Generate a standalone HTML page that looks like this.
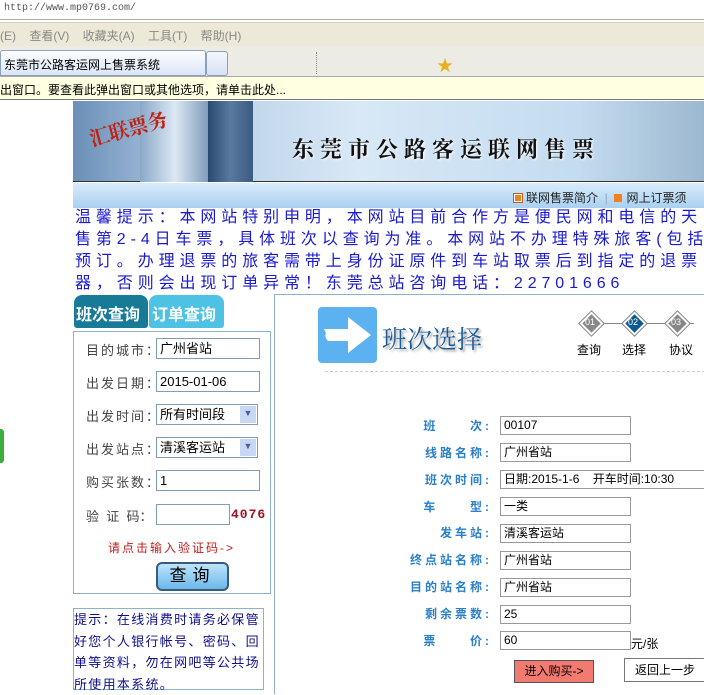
<!DOCTYPE html>
<html><head><meta charset="utf-8"><style>
*{margin:0;padding:0;box-sizing:border-box}
body{width:704px;height:688px;overflow:hidden;position:relative;background:#fff;font-family:"Liberation Sans","Noto Sans CJK SC",sans-serif;font-size:12px;color:#000}
.a{position:absolute;white-space:nowrap}
.inp{position:absolute;border:1px solid #7f9db9;background:#fff;height:21px;font-size:13px;padding:2px 3px;line-height:15px}
.lbl{position:absolute;color:#444;font-size:13px;letter-spacing:2px}
.rl{position:absolute;right:212px;color:#2a7fc9;font-weight:bold;font-size:12px;letter-spacing:3px;text-align:right}
.ri{position:absolute;left:500px;width:131px;height:19px;border:1px solid #999;background:#fff;font-size:12px;padding:1px 3px;line-height:15px}
.dia{position:absolute;width:17px;height:17px;transform:rotate(45deg);border:2px solid #fff;outline:1px solid #888}
</style></head><body>
<div class="a" style="left:0;top:0;width:704px;height:20px;background:#fff;border-bottom:1px solid #aaa;font-family:'Liberation Mono',monospace;font-size:10px;color:#555;padding:3px 4px">http://www.mp0769.com/</div>
<div class="a" style="left:0;top:22px;width:704px;height:24px;background:#ece9d8;border-top:1px solid #d8d4c4;color:#888;font-size:12px;padding:4px 0">(E)&nbsp;&nbsp;&nbsp;&nbsp;查看(V)&nbsp;&nbsp;&nbsp;&nbsp;收藏夹(A)&nbsp;&nbsp;&nbsp;&nbsp;工具(T)&nbsp;&nbsp;&nbsp;&nbsp;帮助(H)</div>
<div class="a" style="left:0;top:46px;width:704px;height:31px;background:#ecebe4;border-bottom:1px solid #aaa"></div>
<div class="a" style="left:0;top:50px;width:206px;height:26px;background:linear-gradient(#fdfeff,#dbe6f6);border:1px solid #8ca0bb;border-radius:3px 3px 0 0;font-size:12px;padding:5px 3px">东莞市公路客运网上售票系统</div>
<div class="a" style="left:206px;top:51px;width:22px;height:25px;background:linear-gradient(#f4f8fd,#d5e1f2);border:1px solid #8ca0bb;border-radius:3px"></div>
<div class="a" style="left:316px;top:52px;height:22px;border-left:1px dotted #888"></div>
<div class="a" style="left:437px;top:52px;font-size:16px;color:#e8b020">★</div>
<div class="a" style="left:0;top:77px;width:704px;height:23px;background:#ffffe1;border-bottom:1px solid #777;font-size:12px;padding:4px 0">出窗口。要查看此弹出窗口或其他选项，请单击此处...</div>
<div class="a" style="left:73px;top:101px;width:631px;height:81px;background:linear-gradient(90deg,#6b8fb8 0,#b8cfe6 20%,#d8e8f6 45%,#c4dcf0 80%,#9cb8d0 100%);border-bottom:1px solid #333"></div>
<div class="a" style="left:140px;top:101px;width:70px;height:81px;background:linear-gradient(90deg,#8aa8c8,#dce8f4,#7a98b8)"></div>
<div class="a" style="left:208px;top:101px;width:45px;height:81px;background:linear-gradient(90deg,#2a4a70,#5a7aa0,#3a5a80)"></div>
<div class="a" style="left:88px;top:113px;font-size:20px;font-weight:bold;color:#c02010;font-family:'Noto Serif CJK SC',serif;transform:rotate(-15deg)">汇联票务</div>
<div class="a" style="left:292px;top:133px;font-size:22px;font-weight:bold;letter-spacing:6px;color:#111;font-family:'Noto Serif CJK SC',serif;text-shadow:1px 1px 2px #fff">东莞市公路客运联网售票</div>
<div class="a" style="left:73px;top:183px;width:631px;height:25px;background:linear-gradient(#d8ecfb,#a9d0f0)"></div>
<div class="a" style="left:514px;top:189px;font-size:12px;color:#222"><span style="display:inline-block;width:8px;height:8px;background:#f08020;border:1px solid #fff;outline:1px solid #c06010;margin-right:4px"></span>联网售票简介&nbsp;&nbsp;<span style="color:#8ab">|</span>&nbsp;&nbsp;<span style="display:inline-block;width:8px;height:8px;background:#f08020;margin-right:4px"></span>网上订票须</div>
<div class="a" style="left:75px;top:207px;width:700px;font-size:16px;line-height:22px;color:#1a1ad0;letter-spacing:4.9px;white-space:normal">温馨提示：本网站特别申明，本网站目前合作方是便民网和电信的天<br>售第2-4日车票，具体班次以查询为准。本网站不办理特殊旅客(包括<br>预订。办理退票的旅客需带上身份证原件到车站取票后到指定的退票<br>器，否则会出现订单异常！东莞总站咨询电话：22701666</div>
<div class="a" style="left:74px;top:295px;width:74px;height:33px;background:#177b98;border-radius:8px 8px 3px 3px;color:#fff;font-weight:bold;font-size:16px;padding:6px 2px">班次查询</div>
<div class="a" style="left:149px;top:295px;width:75px;height:33px;background:#4ec2e4;border-radius:8px 8px 3px 3px;color:#fff;font-weight:bold;font-size:16px;padding:6px 3px">订单查询</div>
<div class="a" style="left:73px;top:331px;width:198px;height:263px;border:1px solid #8fb0cc"></div>
<div class="lbl" style="left:86px;top:340px">目的城市：</div><div class="inp" style="left:156px;top:338px;width:104px">广州省站</div>
<div class="lbl" style="left:86px;top:373px">出发日期：</div><div class="inp" style="left:156px;top:371px;width:104px">2015-01-06</div>
<div class="lbl" style="left:86px;top:406px">出发时间：</div><div class="inp" style="left:156px;top:404px;width:102px">所有时间段<span style="position:absolute;right:1px;top:1px;width:16px;height:17px;background:#c8d8f4;color:#4d6185;font-size:9px;text-align:center">▼</span></div>
<div class="lbl" style="left:86px;top:439px">出发站点：</div><div class="inp" style="left:156px;top:437px;width:102px">清溪客运站<span style="position:absolute;right:1px;top:1px;width:16px;height:17px;background:#c8d8f4;color:#4d6185;font-size:9px;text-align:center">▼</span></div>
<div class="lbl" style="left:86px;top:472px">购买张数：</div><div class="inp" style="left:156px;top:470px;width:104px">1</div>
<div class="lbl" style="left:86px;top:506px;letter-spacing:0">验&nbsp;&nbsp;证&nbsp;&nbsp;码：</div><div class="inp" style="left:156px;top:504px;width:74px"></div>
<div class="a" style="left:231px;top:507px;color:#a01020;font-family:'Liberation Mono',monospace;font-size:13px;font-weight:bold;letter-spacing:1px">4076</div>
<div class="a" style="left:108px;top:539px;color:#c02020;font-size:12px;letter-spacing:2px">请点击输入验证码-&gt;</div>
<div class="a" style="left:156px;top:562px;width:73px;height:29px;border:2px solid #3a5a80;border-radius:6px;background:linear-gradient(#bfe4fb,#6ab8ea);font-size:17px;text-align:center;line-height:24px;letter-spacing:6px">查询</div>
<div class="a" style="left:73px;top:608px;width:191px;height:82px;border:1px solid #8fb0cc;color:#10108a;font-size:13px;line-height:21.5px;letter-spacing:1.3px;white-space:normal;padding-top:0">提示：在线消费时请务必保管好您个人银行帐号、密码、回单等资料，勿在网吧等公共场所使用本系统。</div>
<div class="a" style="left:274px;top:294px;width:440px;height:400px;border-left:1px solid #8fb0cc;border-top:1px solid #8fb0cc"></div>
<div class="a" style="left:318px;top:307px;width:59px;height:56px;background:#5cb2f0;border-radius:4px"></div>
<svg class="a" style="left:318px;top:307px" width="59" height="56"><path d="M6 22 L30 22 L30 10 L53 28 L30 46 L30 34 L10 34 Q6 30 8 26 Z" fill="#fff"/></svg>
<div class="a" style="left:382px;top:320px;font-size:25px;color:#1e5a98;font-family:'Noto Serif CJK SC',serif;text-shadow:2px 2px 2px #aaa">班次选择</div>
<div class="a" style="left:590px;top:323px;width:104px;border-top:1px solid #888"></div>
<div class="dia" style="left:583px;top:315px;background:#888"></div>
<div class="dia" style="left:626px;top:315px;background:#0e5a90"></div>
<div class="dia" style="left:669px;top:315px;background:#888"></div>
<div class="a" style="left:585px;top:317px;color:#fff;font-size:9px">01</div>
<div class="a" style="left:628px;top:317px;color:#fff;font-size:9px">02</div>
<div class="a" style="left:671px;top:317px;color:#fff;font-size:9px">03</div>
<div class="a" style="left:577px;top:341px;font-size:12px">查询</div>
<div class="a" style="left:622px;top:341px;font-size:12px">选择</div>
<div class="a" style="left:669px;top:341px;font-size:12px">协议</div>
<div class="a" style="left:325px;top:371px;width:380px;border-top:1px dashed #ccc"></div>
<div class="rl" style="top:417px">班&nbsp;&nbsp;&nbsp;&nbsp;&nbsp;次:</div><div class="ri" style="top:416px">00107</div>
<div class="rl" style="top:444px">线路名称:</div><div class="ri" style="top:443px">广州省站</div>
<div class="rl" style="top:471px">班次时间:</div><div class="ri" style="top:470px;width:210px">日期:2015-1-6&nbsp;&nbsp;&nbsp;&nbsp;开车时间:10:30</div>
<div class="rl" style="top:498px">车&nbsp;&nbsp;&nbsp;&nbsp;&nbsp;型:</div><div class="ri" style="top:497px">一类</div>
<div class="rl" style="top:524px">发车站:</div><div class="ri" style="top:524px">清溪客运站</div>
<div class="rl" style="top:551px">终点站名称:</div><div class="ri" style="top:551px">广州省站</div>
<div class="rl" style="top:578px">目的站名称:</div><div class="ri" style="top:578px">广州省站</div>
<div class="rl" style="top:605px">剩余票数:</div><div class="ri" style="top:605px">25</div>
<div class="rl" style="top:632px">票&nbsp;&nbsp;&nbsp;&nbsp;&nbsp;价:</div><div class="ri" style="top:631px">60</div>
<div class="a" style="left:631px;top:635px;font-size:12px">元/张</div>
<div class="a" style="left:514px;top:660px;width:80px;height:23px;background:#f27a70;border:1px solid #555;font-size:12px;text-align:center;line-height:21px">进入购买-&gt;</div>
<div class="a" style="left:624px;top:658px;width:82px;height:24px;background:#fff;border:1px solid #777;font-size:12px;text-align:center;line-height:22px">返回上一步</div>
<div class="a" style="left:0;top:429px;width:4px;height:34px;background:#3cae3c;border-radius:0 3px 3px 0"></div>
</body></html>
